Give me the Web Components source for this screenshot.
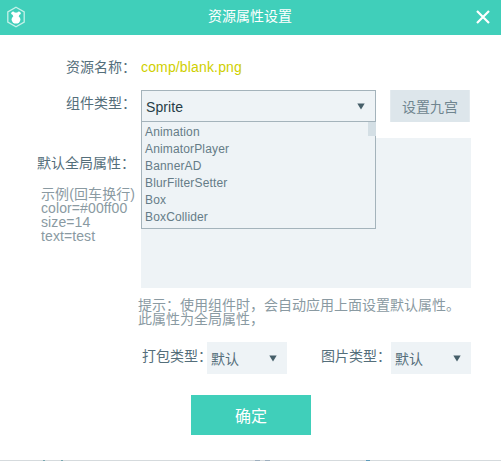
<!DOCTYPE html>
<html lang="zh-CN">
<head>
<meta charset="utf-8">
<title>资源属性设置</title>
<style>
body{margin:0;background:#fff;font-family:"Liberation Sans","Noto Sans CJK SC",sans-serif;font-size:14px;color:#546e7a;overflow:hidden}
</style>
</head>
<body>
<settings-dialog></settings-dialog>
<script>
const define=(name,html)=>customElements.define(name,class extends HTMLElement{
  constructor(){
    super();
    this.attachShadow({mode:"open"}).innerHTML="<style>*{box-sizing:border-box}</style>"+html;
  }
});

define("title-bar",`
<style>
:host{display:grid;grid-template-columns:1fr auto 1fr;align-items:center;height:35px;box-sizing:border-box;padding:0 11px 2px 6px;background:#40cfba;color:#fff;line-height:20px}
svg{display:block}
.close{justify-self:end}
.name{position:relative;left:2px;top:-1px}
</style>
<svg width="20" height="22" viewBox="0 0 20 22">
<path d="M10 1.3 18.2 6v10L10 20.7 1.8 16V6Z" fill="none" stroke="#c4f1e9" stroke-width="1.3"/>
<g fill="#fff"><circle cx="7.1" cy="7.2" r="1.8"/><circle cx="12.9" cy="7.2" r="1.8"/><ellipse cx="10" cy="9" rx="3.2" ry="2.4"/><ellipse cx="10" cy="13.6" rx="4.4" ry="4"/></g>
</svg>
<span class="name"><slot></slot></span>
<svg class="close" width="14" height="14" viewBox="0 0 14 14"><path d="M1 1 13 13M13 1 1 13" stroke="#fff" stroke-width="2.2"/></svg>
`);

define("field-label",`
<style>
:host{display:block;flex:none;line-height:20px;text-align:right;white-space:nowrap}
</style><slot></slot>`);

define("select-box",`
<style>
:host{display:flex;position:relative;box-sizing:border-box;flex:none;height:32px;align-items:center;justify-content:space-between;background:#eef3f6;padding:2px 10px 0 4px;line-height:20px}
:host([open]){border:1px solid #a4b3bb;color:#263d47;padding:2px 10px 0 4px;letter-spacing:.1px}
svg{display:block;position:relative;top:-1px}
</style>
<slot></slot>
<svg width="8" height="7" viewBox="0 0 8 7"><path d="M.3.4h7.4L4 6.6Z" fill="#465f69"/></svg>
<slot name="menu"></slot>
`);

define("option-list",`
<style>
:host{position:absolute;z-index:2;left:-1px;top:30px;width:235px;height:108px;box-sizing:border-box;border:1px solid #a4b3bb;background:#eef3f6;color:#657c87;font-size:12px;letter-spacing:.15px;line-height:17px;padding:2px 3px}
i{position:absolute;right:-1px;top:0;width:8px;height:14px;background:#d4dfe5}
</style>
<slot></slot><i></i>`);

define("option-item",`<style>:host{display:block;height:17px;white-space:nowrap}</style><slot></slot>`);

define("push-button",`
<style>
:host{display:flex;box-sizing:border-box;align-items:center;justify-content:center;flex:none;width:80px;height:32px;background:#dde6eb;border:1px solid #e4ebef;border-width:0 1px;color:#6f858f}
:host([primary]){width:120px;height:40px;border:0;background:#40cfba;color:#fff;font-size:16px}
</style><slot></slot>`);

define("settings-dialog",`
<style>
:host{display:flex;flex-direction:column;height:461px;box-sizing:border-box}
.row{display:flex;align-items:flex-start}
.l{width:136px;margin-right:5px}
.file{color:#cfcf00;line-height:20px;letter-spacing:.15px}
.area{width:330px;height:150px;background:#eef3f6}
.side{display:flex;flex-direction:column;width:141px;padding-top:15px}
.side field-label{width:135px}
.note{color:#8a9aa2;line-height:14px;white-space:nowrap}
.example{margin:14px 0 0 41px;letter-spacing:.1px}
.hint{margin:10px 0 0 138px}
.types{margin:16px 0 0 142px}
.types field-label{margin-top:4px;width:65px;text-align:left}
.types select-box{width:80px}
.types .second{margin-left:34px;width:70px}
.edge{height:1px;margin-top:auto;background:linear-gradient(#78a8b0,#78a8b0) 43px 0/2px 1px no-repeat,linear-gradient(#78a8b0,#78a8b0) 61px 0/2px 1px no-repeat,linear-gradient(#9fb0bf,#9fb0bf) 255px 0/5px 1px no-repeat,linear-gradient(#9fb0bf,#9fb0bf) 265px 0/5px 1px no-repeat,linear-gradient(#5f9cbb,#5f9cbb) 366px 0/4px 1px no-repeat,#d5dadd}
</style>
<title-bar>资源属性设置</title-bar>
<div class="row" style="margin-top:22px"><field-label class="l">资源名称：</field-label><span class="file">comp/blank.png</span></div>
<div class="row" style="margin-top:13px"><field-label class="l" style="padding-top:3px">组件类型：</field-label>
<select-box open style="width:235px">Sprite<option-list slot="menu"><option-item>Animation</option-item><option-item>AnimatorPlayer</option-item><option-item>BannerAD</option-item><option-item>BlurFilterSetter</option-item><option-item>Box</option-item><option-item>BoxCollider</option-item></option-list></select-box>
<push-button style="margin-left:14px">设置九宫</push-button></div>
<div class="row" style="margin-top:16px"><div class="side"><field-label>默认全局属性：</field-label><div class="note example">示例(回车换行)<br>color=#00ff00<br>size=14<br>text=test</div></div><div class="area"></div></div>
<div class="note hint">提示：使用组件时，会自动应用上面设置默认属性。<br>此属性为全局属性，</div>
<div class="row types"><field-label>打包类型：</field-label><select-box>默认</select-box><field-label class="second">图片类型：</field-label><select-box>默认</select-box></div>
<push-button primary style="margin:21px 0 0 191px">确定</push-button>
<div class="edge"></div>
`);
</script>
</body>
</html>
